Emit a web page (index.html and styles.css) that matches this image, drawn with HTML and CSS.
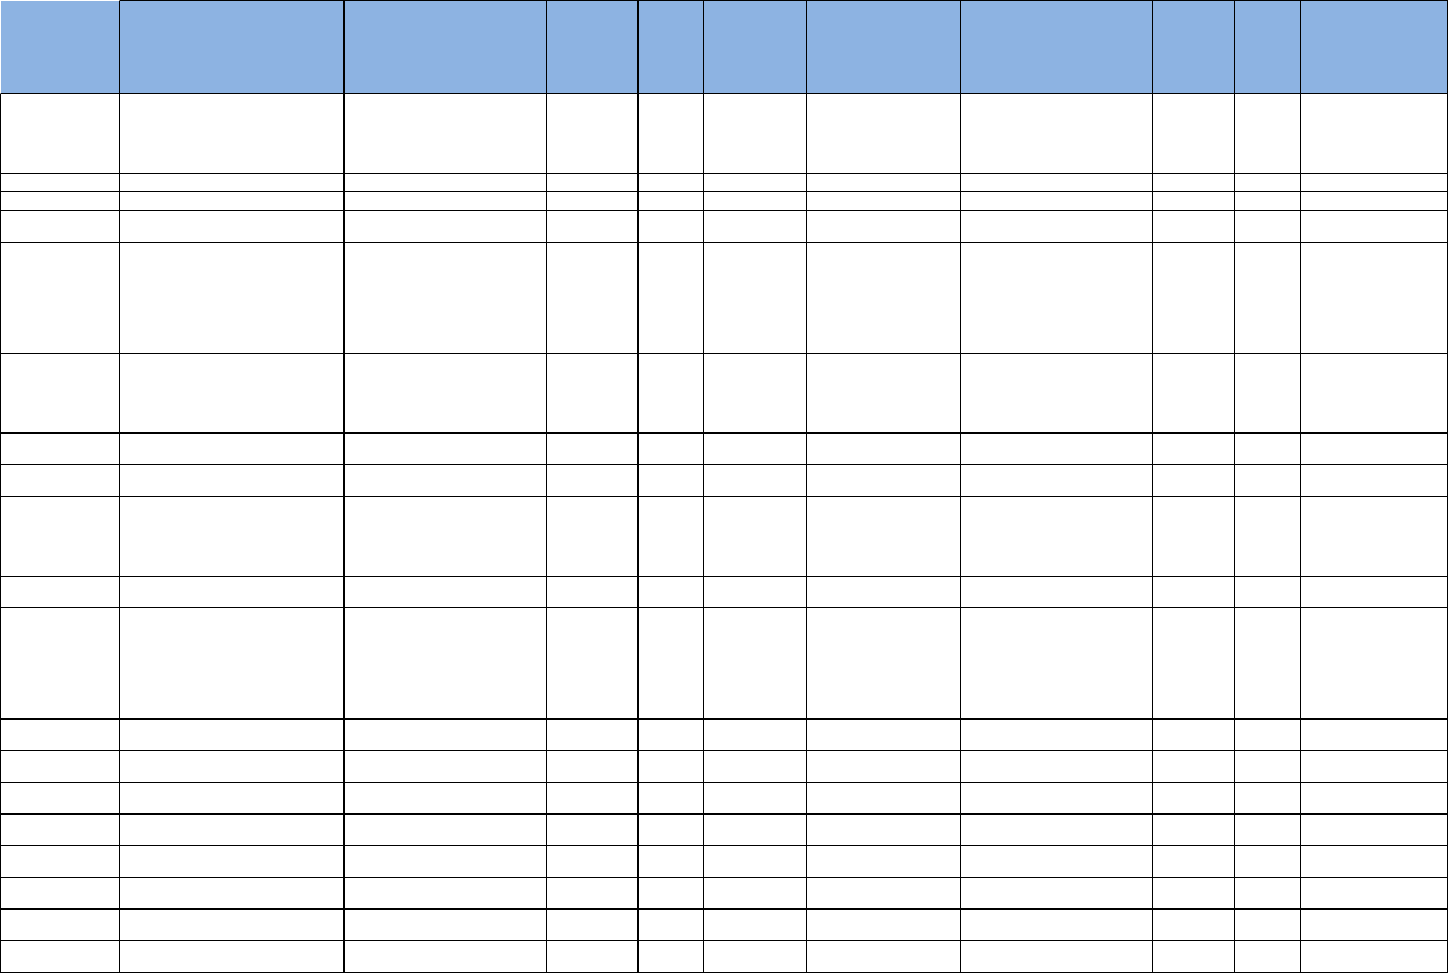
FILE: index.html
```html
<!DOCTYPE html>
<html lang="en">
<head>
<meta charset="utf-8">
<title>Table</title>
<link rel="stylesheet" href="styles.css">
</head>
<body>
<div class="sheet">
  <div class="row head h94"><div class="c"></div><div class="c"></div><div class="c"></div><div class="c"></div><div class="c"></div><div class="c"></div><div class="c"></div><div class="c"></div><div class="c"></div><div class="c"></div><div class="c"></div></div>
  <div class="row h80"><div class="c"></div><div class="c"></div><div class="c"></div><div class="c"></div><div class="c"></div><div class="c"></div><div class="c"></div><div class="c"></div><div class="c"></div><div class="c"></div><div class="c"></div></div>
  <div class="row h18"><div class="c"></div><div class="c"></div><div class="c"></div><div class="c"></div><div class="c"></div><div class="c"></div><div class="c"></div><div class="c"></div><div class="c"></div><div class="c"></div><div class="c"></div></div>
  <div class="row h19"><div class="c"></div><div class="c"></div><div class="c"></div><div class="c"></div><div class="c"></div><div class="c"></div><div class="c"></div><div class="c"></div><div class="c"></div><div class="c"></div><div class="c"></div></div>
  <div class="row h32"><div class="c"></div><div class="c"></div><div class="c"></div><div class="c"></div><div class="c"></div><div class="c"></div><div class="c"></div><div class="c"></div><div class="c"></div><div class="c"></div><div class="c"></div></div>
  <div class="row h111"><div class="c"></div><div class="c"></div><div class="c"></div><div class="c"></div><div class="c"></div><div class="c"></div><div class="c"></div><div class="c"></div><div class="c"></div><div class="c"></div><div class="c"></div></div>
  <div class="row h80 thick"><div class="c"></div><div class="c"></div><div class="c"></div><div class="c"></div><div class="c"></div><div class="c"></div><div class="c"></div><div class="c"></div><div class="c"></div><div class="c"></div><div class="c"></div></div>
  <div class="row h31"><div class="c"></div><div class="c"></div><div class="c"></div><div class="c"></div><div class="c"></div><div class="c"></div><div class="c"></div><div class="c"></div><div class="c"></div><div class="c"></div><div class="c"></div></div>
  <div class="row h32"><div class="c"></div><div class="c"></div><div class="c"></div><div class="c"></div><div class="c"></div><div class="c"></div><div class="c"></div><div class="c"></div><div class="c"></div><div class="c"></div><div class="c"></div></div>
  <div class="row h80"><div class="c"></div><div class="c"></div><div class="c"></div><div class="c"></div><div class="c"></div><div class="c"></div><div class="c"></div><div class="c"></div><div class="c"></div><div class="c"></div><div class="c"></div></div>
  <div class="row h31"><div class="c"></div><div class="c"></div><div class="c"></div><div class="c"></div><div class="c"></div><div class="c"></div><div class="c"></div><div class="c"></div><div class="c"></div><div class="c"></div><div class="c"></div></div>
  <div class="row h112 thick"><div class="c"></div><div class="c"></div><div class="c"></div><div class="c"></div><div class="c"></div><div class="c"></div><div class="c"></div><div class="c"></div><div class="c"></div><div class="c"></div><div class="c"></div></div>
  <div class="row h31"><div class="c"></div><div class="c"></div><div class="c"></div><div class="c"></div><div class="c"></div><div class="c"></div><div class="c"></div><div class="c"></div><div class="c"></div><div class="c"></div><div class="c"></div></div>
  <div class="row h32"><div class="c"></div><div class="c"></div><div class="c"></div><div class="c"></div><div class="c"></div><div class="c"></div><div class="c"></div><div class="c"></div><div class="c"></div><div class="c"></div><div class="c"></div></div>
  <div class="row h32 thick"><div class="c"></div><div class="c"></div><div class="c"></div><div class="c"></div><div class="c"></div><div class="c"></div><div class="c"></div><div class="c"></div><div class="c"></div><div class="c"></div><div class="c"></div></div>
  <div class="row h31"><div class="c"></div><div class="c"></div><div class="c"></div><div class="c"></div><div class="c"></div><div class="c"></div><div class="c"></div><div class="c"></div><div class="c"></div><div class="c"></div><div class="c"></div></div>
  <div class="row h32"><div class="c"></div><div class="c"></div><div class="c"></div><div class="c"></div><div class="c"></div><div class="c"></div><div class="c"></div><div class="c"></div><div class="c"></div><div class="c"></div><div class="c"></div></div>
  <div class="row h32 thick"><div class="c"></div><div class="c"></div><div class="c"></div><div class="c"></div><div class="c"></div><div class="c"></div><div class="c"></div><div class="c"></div><div class="c"></div><div class="c"></div><div class="c"></div></div>
  <div class="row h31"><div class="c"></div><div class="c"></div><div class="c"></div><div class="c"></div><div class="c"></div><div class="c"></div><div class="c"></div><div class="c"></div><div class="c"></div><div class="c"></div><div class="c"></div></div>
  <div class="row h32"><div class="c"></div><div class="c"></div><div class="c"></div><div class="c"></div><div class="c"></div><div class="c"></div><div class="c"></div><div class="c"></div><div class="c"></div><div class="c"></div><div class="c"></div></div>
</div>
</body>
</html>
```

FILE: styles.css
```css
* {
  box-sizing: border-box;
}

html,
body {
  margin: 0;
  padding: 0;
  background: #ffffff;
  font-family: "Liberation Sans", Arial, sans-serif;
}

.sheet {
  width: 1448px;
  display: flex;
  flex-direction: column;
}

.row {
  display: grid;
  grid-template-columns: 120px 225px 202px 92px 65px 103px 154px 192px 82px 66px 147px;
}

.c {
  border-right: 1px solid #000;
  border-bottom: 1px solid #000;
}

.c:first-child {
  border-left: 1px solid #000;
}

.c:nth-child(2),
.c:nth-child(4) {
  border-right-width: 2px;
}

.thick .c {
  border-bottom-width: 2px;
}

.head .c {
  background: #8db3e2;
  border-top: 1px solid #000;
}

.head .c:first-child {
  border-left-color: #ffffff;
  border-top-color: #ffffff;
}

.h18 { height: 18px; }
.h19 { height: 19px; }
.h31 { height: 31px; }
.h32 { height: 32px; }
.h80 { height: 80px; }
.h94 { height: 94px; }
.h111 { height: 111px; }
.h112 { height: 112px; }
```
